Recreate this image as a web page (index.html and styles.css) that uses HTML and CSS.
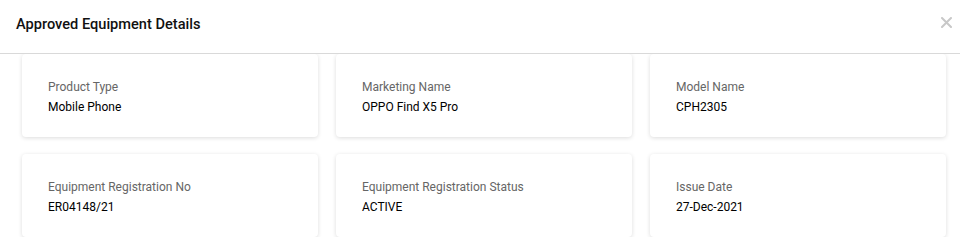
FILE: index.html
```html
<!DOCTYPE html>
<html lang="en">
<head>
    <meta charset="UTF-8">
    <title>Approved Equipment Details</title>
    <link rel="stylesheet" href="styles.css">
</head>
<body>
<div class="modal">
    <div class="modal-header">
        <h3>Approved Equipment Details</h3>
        <button class="close" aria-label="Close">
            <svg width="11" height="11" viewBox="0 0 11 11">
                <path d="M1 1L10 10M10 1L1 10" stroke="#c8c8c8" stroke-width="2" stroke-linecap="round"/>
            </svg>
        </button>
    </div>
    <div class="modal-body">
        <div class="card">
            <div class="label">Product Type</div>
            <div class="value">Mobile Phone</div>
        </div>
        <div class="card">
            <div class="label">Marketing Name</div>
            <div class="value">OPPO Find X5 Pro</div>
        </div>
        <div class="card">
            <div class="label">Model Name</div>
            <div class="value">CPH2305</div>
        </div>
        <div class="card">
            <div class="label">Equipment Registration No</div>
            <div class="value">ER04148/21</div>
        </div>
        <div class="card">
            <div class="label">Equipment Registration Status</div>
            <div class="value">ACTIVE</div>
        </div>
        <div class="card">
            <div class="label">Issue Date</div>
            <div class="value">27-Dec-2021</div>
        </div>
    </div>
</div>
</body>
</html>
```

FILE: styles.css
```css
body {
    font-family: Roboto, "Liberation Sans", sans-serif;
    background: #fff;
    margin: 0;
    padding: 0;
    overflow: hidden;
}
.modal-header {
    height: 54px;
    box-sizing: border-box;
    border-bottom: 1px solid #d9d9d9;
    display: flex;
    align-items: flex-start;
    justify-content: space-between;
    padding: 14px 8px 0 16px;
    position: relative;
    z-index: 2;
    background: #fff;
}
.modal-header h3 {
    margin: 0;
    font-size: 14.6px;
    line-height: 20px;
    font-weight: 500;
    color: #111;
}
.close {
    background: none;
    border: none;
    padding: 0;
    width: 11px;
    height: 11px;
    margin-top: 3px;
    cursor: pointer;
    display: flex;
}
.modal-body {
    display: grid;
    grid-template-columns: repeat(3, 296px);
    column-gap: 18px;
    row-gap: 17px;
    padding: 0 14px 0 22px;
}
.card {
    background: #fff;
    border-radius: 4px;
    box-shadow: 0 1px 4px rgba(0,0,0,0.14);
    padding: 23px 26px 20px;
}
.label {
    font-size: 12px;
    line-height: 20px;
    color: #666;
}
.value {
    font-size: 12px;
    line-height: 20px;
    color: #000;
}
```
